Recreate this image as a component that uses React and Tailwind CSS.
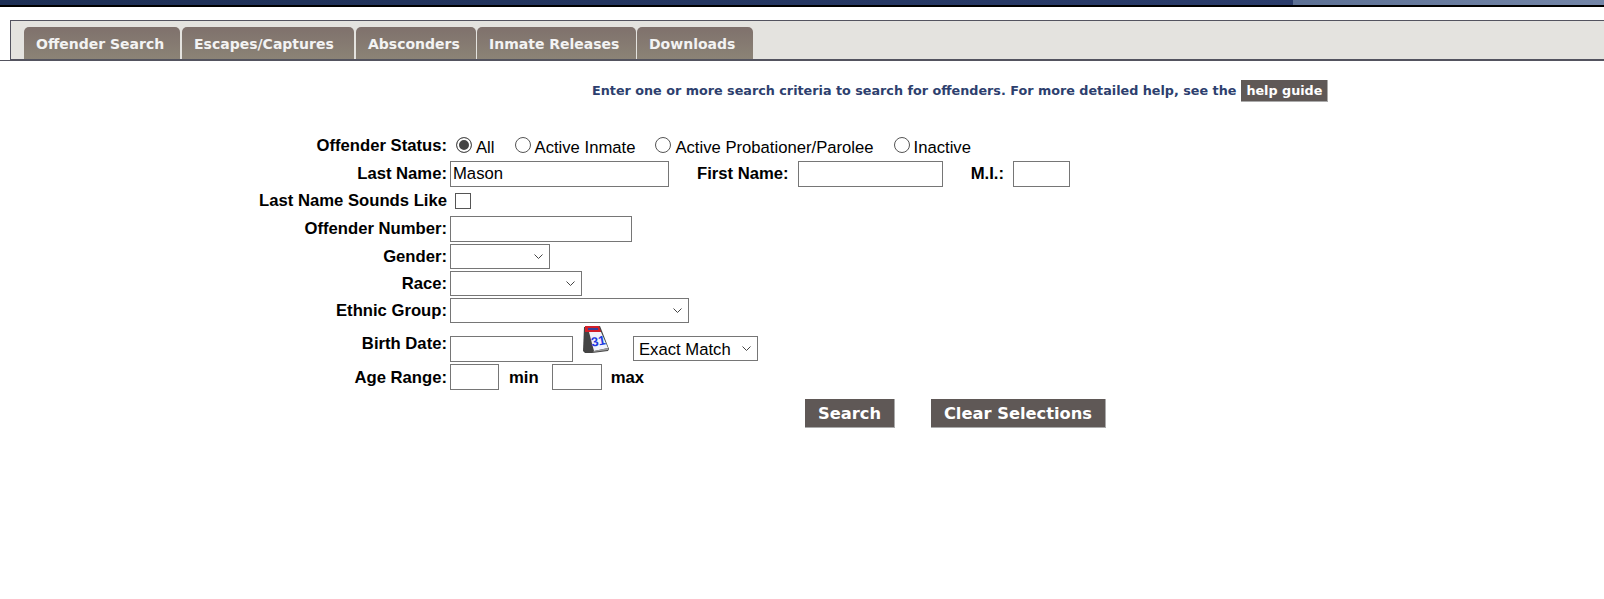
import React from "react";

const tabs = [
  { label: "Offender Search", className: "mr-[2px] w-[156px]" },
  { label: "Escapes/Captures", className: "mr-[2px] w-[172px]" },
  { label: "Absconders", className: "mr-[1px] w-[120px]" },
  { label: "Inmate Releases", className: "mr-[1px] w-[159px]" },
  { label: "Downloads", className: "w-[116px]" },
];

const inputClass = "h-[26px] border border-[#767676] bg-white px-[2px] text-[16.67px] text-black outline-none";

const Row = ({ label, className = "", labelClass = "", children }) => (
  <div className={`flex ${className}`}>
    <label className={`w-[447px] text-right font-bold leading-[18px] ${labelClass}`}>{label}</label>
    <div className="ml-[3px] flex items-center">{children}</div>
  </div>
);

const Radio = ({ label, checked, className = "" }) => (
  <label className={`flex items-center ${className}`}>
    <input
      type="radio"
      name="status"
      defaultChecked={checked}
      className="m-0 h-4 w-4 -translate-y-[2px] appearance-none rounded-full border border-[#555555] bg-white checked:bg-[#444444] checked:shadow-[inset_0_0_0_2px_white]"
    />
    <span className="ml-[4px] translate-y-[1px] leading-[18px]">{label}</span>
  </label>
);

const Select = ({ className = "", children }) => (
  <div className={`relative h-[25px] ${className}`}>
    <select className="h-full w-full appearance-none border border-[#767676] bg-white pl-[5px] text-[16.67px] text-black outline-none">
      {children}
    </select>
    <svg width="9" height="5" viewBox="0 0 9 5" className="pointer-events-none absolute right-[7px] top-[10px]">
      <path d="M0.5 0.5 L4.5 4.5 L8.5 0.5" fill="none" stroke="#444444" strokeWidth="1" />
    </svg>
  </div>
);

const CalendarIcon = () => (
  <svg width="28" height="29" viewBox="0 0 28 29" className="ml-[9px] mt-[-11px] self-start">
    <path d="M2 2 L18 1 L27 24 L26 26 L10 28 L3 28 L1 26 Z" fill="#444444" />
    <path d="M3 1 H17 L19 7 H3 Z" fill="#d3202a" />
    <path d="M6 3 H16 V5 H6 Z" fill="#35419a" />
    <path d="M7 7 H19 L26 23 L12 26 Z" fill="#f1f3fb" />
    <path d="M12 26 L26 23 L26 25 L11 27 Z" fill="#9a9a9a" />
    <text x="9" y="21" fontSize="13" fontWeight="700" fill="#1f3be0" fontFamily="Liberation Sans, sans-serif" transform="rotate(-10 14 16)">31</text>
  </svg>
);

export default function App() {
  return (
    <div className="min-h-[599px] bg-white font-['Liberation_Sans',Arial,sans-serif] text-[16.67px] text-black">
      <div className="flex h-[7px] border-b-2 border-black">
        <div className="h-[5px] w-[1293px] bg-gradient-to-r from-[#1d2f55] to-[#2a3c6b]"></div>
        <div className="h-[5px] flex-1 bg-gradient-to-r from-[#5d7195] to-[#7486a8]"></div>
      </div>

      <div className="mt-[13px] border-b border-[#53535f]">
        <div className="ml-[10px] flex h-[40px] border-b border-l border-t border-[#53535f] bg-[#e4e3df] pl-[13px] pt-[6px]">
          {tabs.map((tab) => (
            <a
              key={tab.label}
              href="#"
              className={`${tab.className} h-[32px] rounded-t-[5px] bg-gradient-to-b from-[#7f716c] to-[#8b8376] pl-[12px] pt-[8px] font-['DejaVu_Sans',Verdana,sans-serif] text-[14px] font-bold leading-[18px] text-[#f3f3f3]`}
            >
              {tab.label}
            </a>
          ))}
        </div>
      </div>

      <div className="ml-[592px] mt-[19px] flex h-[22px] items-center font-['DejaVu_Sans',Verdana,sans-serif] text-[12.76px] font-bold text-[#2d3f6e]">
        <span>Enter one or more search criteria to search for offenders. For more detailed help, see the</span>
        <a href="#" className="ml-[5px] flex h-[22px] w-[87px] items-center justify-center border-b border-r border-[#aaaaaa] bg-[#5f5856] text-white">
          help guide
        </a>
      </div>

      <form className="mt-[35px]">
        <Row label="Offender Status:" className="h-[20px] items-center" labelClass="-translate-y-[1px]">
          <Radio label="All" checked className="ml-[6px]" />
          <Radio label="Active Inmate" className="ml-[20px]" />
          <Radio label="Active Probationer/Parolee" className="ml-[20px]" />
          <Radio label="Inactive" className="ml-[20px]" />
        </Row>

        <Row label="Last Name:" className="mt-[4px] h-[26px] items-center">
          <input type="text" defaultValue="Mason" className={`${inputClass} w-[219px]`} />
          <span className="ml-[28px] -translate-y-[1px] font-bold">First Name:</span>
          <input type="text" className={`${inputClass} ml-[9px] w-[145px]`} />
          <span className="ml-[28px] -translate-y-[1px] font-bold">M.I.:</span>
          <input type="text" className={`${inputClass} ml-[9px] w-[57px]`} />
        </Row>

        <Row label="Last Name Sounds Like" className="mt-[1px] h-[26px] items-center">
          <input type="checkbox" className="m-0 ml-[5px] h-4 w-4 appearance-none border border-[#555555] bg-white" />
        </Row>

        <Row label="Offender Number:" className="mt-[2px] h-[26px] items-center">
          <input type="text" className={`${inputClass} w-[182px]`} />
        </Row>

        <Row label="Gender:" className="mt-[2px] h-[25px] items-center">
          <Select className="w-[100px]"><option></option></Select>
        </Row>

        <Row label="Race:" className="mt-[2px] h-[25px] items-center">
          <Select className="w-[132px]"><option></option></Select>
        </Row>

        <Row label="Ethnic Group:" className="mt-[2px] h-[25px] items-center">
          <Select className="w-[239px]"><option></option></Select>
        </Row>

        <Row label="Birth Date:" className="mt-[13px] h-[26px]" labelClass="-translate-y-[1px]">
          <input type="text" className={`${inputClass} w-[123px]`} />
          <CalendarIcon />
          <Select className="ml-[23px] w-[125px] self-start"><option>Exact Match</option></Select>
        </Row>

        <Row label="Age Range:" className="mt-[2px] h-[26px] items-center" labelClass="translate-y-[1px]">
          <input type="text" className={`${inputClass} w-[49px]`} />
          <span className="ml-[10px] font-bold">min</span>
          <input type="text" className={`${inputClass} ml-[13px] w-[50px]`} />
          <span className="ml-[9px] font-bold">max</span>
        </Row>

        <div className="ml-[805px] mt-[9px] flex font-['DejaVu_Sans',Verdana,sans-serif] text-[16.3px] font-bold text-white">
          <button type="button" className="h-[29px] w-[90px] border-b border-r border-[#aaaaaa] bg-[#5f5856] pt-[2px]">Search</button>
          <button type="button" className="ml-[36px] h-[29px] w-[175px] border-b border-r border-[#aaaaaa] bg-[#5f5856] pt-[2px]">Clear Selections</button>
        </div>
      </form>
    </div>
  );
}
